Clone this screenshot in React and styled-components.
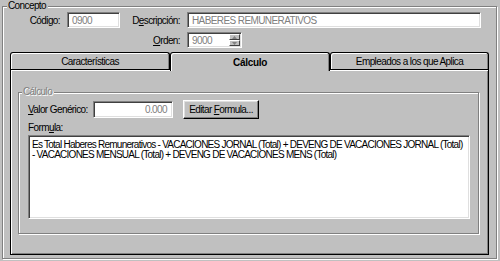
import React from 'react'
import styled, { createGlobalStyle } from 'styled-components'

const GlobalStyle = createGlobalStyle`
  html, body {
    margin: 0;
    padding: 0;
    background: #c0c0c0;
    width: 500px;
    height: 261px;
    overflow: hidden;
  }
  body {
    font-family: "Liberation Sans", Arial, sans-serif;
    font-size: 10px;
    letter-spacing: -0.6px;
    color: #000;
  }
`

const Window = styled.div`
  width: 500px;
  height: 261px;
  box-sizing: border-box;
  padding: 6px 0 0 2px;
`

const GroupBox = styled.div`
  position: relative;
  box-sizing: border-box;
  width: ${p => p.$w}px;
  height: ${p => p.$h}px;
  border: 1px solid #808080;
  box-shadow: inset 1px 1px 0 #fff, 1px 1px 0 #fff;
`

const Legend = styled.span`
  position: absolute;
  top: -7px;
  left: ${p => p.$left}px;
  padding: 0 2px 0 1px;
  line-height: 12px;
  background: #c0c0c0;
  color: ${p => (p.$disabled ? '#808080' : '#000')};
  text-shadow: ${p => (p.$disabled ? '1px 1px 0 #fff' : 'none')};
`

const Fields = styled.div`
  display: grid;
  grid-template-columns: 57px 53px 53px 294px;
  grid-auto-rows: 16px;
  column-gap: 7px;
  row-gap: 4px;
  margin-top: 5px;
`

const Label = styled.label`
  display: flex;
  align-items: center;
  justify-content: flex-end;
  white-space: nowrap;
  grid-column: ${p => p.$col || 'auto'};
`

const Field = styled.div`
  position: relative;
  box-sizing: border-box;
  width: ${p => (p.$w ? `${p.$w}px` : 'auto')};
  height: ${p => p.$h || 16}px;
  display: flex;
  align-items: center;
  justify-content: ${p => (p.$right ? 'flex-end' : 'flex-start')};
  padding: 0 ${p => (p.$right ? 5 : 3)}px 0 4px;
  background: #fff;
  color: #808080;
  border: 1px solid;
  border-color: #808080 #fff #fff #808080;
  box-shadow: inset 1px 1px 0 #404040, inset -1px -1px 0 #dfdfdf;
  white-space: nowrap;
  overflow: hidden;
`

const Spin = styled.div`
  position: absolute;
  top: 1px;
  right: 1px;
  bottom: 1px;
  width: 11px;
  display: flex;
  flex-direction: column;
`

const SpinButton = styled.div`
  flex: 1;
  box-sizing: border-box;
  background: #c0c0c0;
  border: 1px solid;
  border-color: #fff #404040 #404040 #fff;
  display: flex;
  align-items: center;
  justify-content: center;
`

const Tabs = styled.div`
  margin: 4px 0 0 7px;
  width: 479px;
`

const TabStrip = styled.div`
  display: flex;
  align-items: flex-end;
  height: 17px;
`

const Tab = styled.div`
  position: relative;
  box-sizing: border-box;
  width: ${p => p.$w}px;
  height: ${p => (p.$active ? 19 : 17)}px;
  margin-bottom: ${p => (p.$active ? -2 : 0)}px;
  z-index: ${p => (p.$active ? 1 : 0)};
  display: flex;
  align-items: center;
  justify-content: center;
  padding-top: ${p => (p.$active ? 1 : 0)}px;
  background: #c0c0c0;
  border: 1px solid #000;
  border-bottom: none;
  border-radius: 3px 3px 0 0;
  box-shadow: inset 1px 1px 0 #fff, inset -1px 0 0 #808080;
  font-weight: ${p => (p.$active ? 'bold' : 'normal')};
  letter-spacing: ${p => (p.$active ? '-0.3px' : '-0.6px')};
  white-space: nowrap;
`

const Panel = styled.div`
  box-sizing: border-box;
  height: 186px;
  border: 1px solid #000;
  box-shadow: inset 1px 1px 0 #fff, inset -1px -1px 0 #808080;
  padding: 22px 0 0 7px;
`

const Content = styled.div`
  display: flex;
  flex-direction: column;
  padding: 7px 0 0 9px;
`

const Row = styled.div`
  display: flex;
  align-items: center;
  height: 19px;
`

const RowLabel = styled.label`
  width: 65px;
  white-space: nowrap;
`

const Button = styled.div`
  box-sizing: border-box;
  width: 76px;
  height: 19px;
  margin-left: 10px;
  display: flex;
  align-items: center;
  justify-content: center;
  background: #c0c0c0;
  border: 1px solid;
  border-color: #fff #000 #000 #fff;
  box-shadow: inset -1px -1px 0 #808080, inset 1px 1px 0 #dfdfdf;
  white-space: nowrap;
`

const FormulaLabel = styled.label`
  margin-top: 2px;
  line-height: 14px;
`

const FormulaBox = styled.div`
  box-sizing: border-box;
  width: 442px;
  height: 84px;
  padding: 4px 3px;
  background: #fff;
  line-height: 10px;
  letter-spacing: -0.75px;
  border: 1px solid;
  border-color: #808080 #fff #fff #808080;
  box-shadow: inset 1px 1px 0 #404040, inset -1px -1px 0 #dfdfdf;
  white-space: nowrap;
  overflow: hidden;
`

const Arrow = ({ up }) => (
  <svg width="5" height="3" viewBox="0 0 5 3">
    <path d={up ? 'M2.5 0 L5 3 L0 3 Z' : 'M0 0 L5 0 L2.5 3 Z'} fill="#808080" />
  </svg>
)

export default function App() {
  return (
    <Window>
      <GlobalStyle />
      <GroupBox $w={495} $h={253}>
        <Legend $left={4}>Concepto</Legend>
        <Fields>
          <Label>Código:</Label>
          <Field>0900</Field>
          <Label>D<u>e</u>scripción:</Label>
          <Field>HABERES REMUNERATIVOS</Field>
          <Label $col="3"><u>O</u>rden:</Label>
          <Field $w={55}>
            9000
            <Spin>
              <SpinButton><Arrow up /></SpinButton>
              <SpinButton><Arrow /></SpinButton>
            </Spin>
          </Field>
        </Fields>
        <Tabs>
          <TabStrip>
            <Tab $w={160}>Características</Tab>
            <Tab $w={160} $active>Cálculo</Tab>
            <Tab $w={159}>Empleados a los que Aplica</Tab>
          </TabStrip>
          <Panel>
            <GroupBox $w={461} $h={142}>
              <Legend $left={3} $disabled>Cálculo</Legend>
              <Content>
                <Row>
                  <RowLabel><u>V</u>alor Genérico:</RowLabel>
                  <Field $w={80} $h={17} $right>0.000</Field>
                  <Button><span>Editar <u>F</u>ormula...</span></Button>
                </Row>
                <FormulaLabel>Form<u>u</u>la:</FormulaLabel>
                <FormulaBox>
                  Es Total Haberes Remunerativos - VACACIONES JORNAL (Total) + DEVENG DE VACACIONES JORNAL (Total)
                  <br />
                  - VACACIONES MENSUAL (Total) + DEVENG DE VACACIONES MENS (Total)
                </FormulaBox>
              </Content>
            </GroupBox>
          </Panel>
        </Tabs>
      </GroupBox>
    </Window>
  )
}
